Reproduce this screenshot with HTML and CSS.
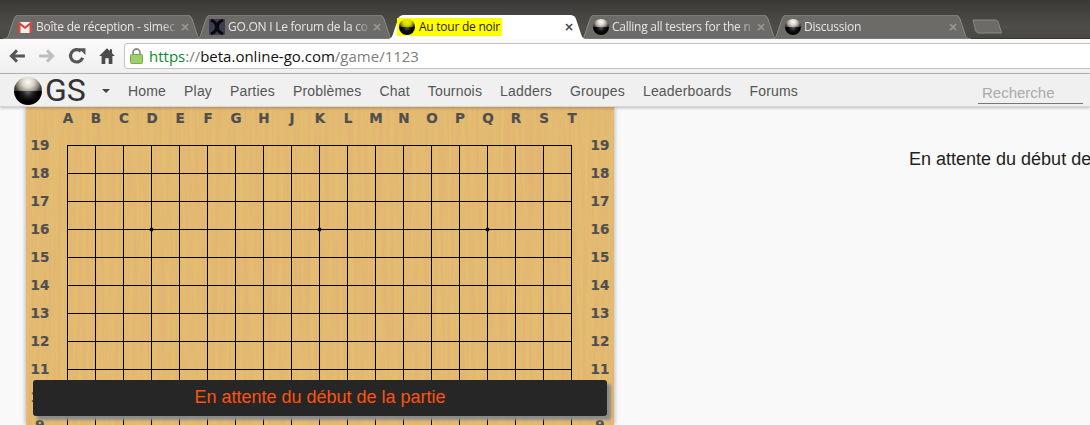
FILE: index.html
```html
<!DOCTYPE html>
<html lang="fr">
<head>
<meta charset="utf-8">
<title>Au tour de noir</title>
<link rel="stylesheet" href="styles.css">
</head>
<body>
<svg class="defs" width="0" height="0" aria-hidden="true">
  <defs>
    <radialGradient id="ballTop" gradientUnits="userSpaceOnUse" cx="14" cy="5" r="14">
      <stop offset="0" stop-color="#fdfbf6"/><stop offset="0.4" stop-color="#dcd6cb"/><stop offset="0.75" stop-color="#908c85"/><stop offset="1" stop-color="#3c3a38"/>
    </radialGradient>
    <radialGradient id="ballBottom" gradientUnits="userSpaceOnUse" cx="14" cy="14" r="14">
      <stop offset="0" stop-color="#6e6e6e"/><stop offset="0.4" stop-color="#222"/><stop offset="0.75" stop-color="#000"/>
    </radialGradient>
    <radialGradient id="ballTopYellow" gradientUnits="userSpaceOnUse" cx="14" cy="5" r="14">
      <stop offset="0" stop-color="#f4f000"/><stop offset="0.5" stop-color="#d8d400"/><stop offset="0.8" stop-color="#8a8800"/><stop offset="1" stop-color="#2a2a00"/>
    </radialGradient>
    <symbol id="ball" viewBox="0 0 28 28">
      <path d="M0 14A14 14 0 0 1 28 14Z" fill="url(#ballTop)"/>
      <path d="M0 14A14 14 0 0 0 28 14Z" fill="url(#ballBottom)"/>
    </symbol>
    <symbol id="ballYellow" viewBox="0 0 28 28">
      <path d="M0 14A14 14 0 0 1 28 14Z" fill="url(#ballTopYellow)"/>
      <path d="M0 14A14 14 0 0 0 28 14Z" fill="url(#ballBottom)"/>
    </symbol>
    <symbol id="tabShape" viewBox="0 0 200 24" preserveAspectRatio="none">
      <path d="M0 24C4 24 5 22 6 19L11 4C12 1 14 0 17 0H183C186 0 188 1 189 4L194 19C195 22 196 24 200 24Z"/>
    </symbol>
  </defs>
</svg>

<header class="tabstrip">
  <div class="tab">
    <svg class="tab-bg" aria-hidden="true"><use href="#tabShape"/></svg>
    <svg class="favicon" viewBox="0 0 16 16"><rect x="1" y="3" width="14" height="11" fill="#eee"/><path d="M1 3V14H3.500V6.500L8 10L12.500 6.500V14H15V3H13.500L8 7.500L2.500 3Z" fill="#d44a3a"/></svg>
    <span class="tab-title">Boîte de réception - simec</span>
    <span class="tab-close">×</span>
  </div>
  <div class="tab">
    <svg class="tab-bg" aria-hidden="true"><use href="#tabShape"/></svg>
    <svg class="favicon" viewBox="0 0 16 16"><rect width="16" height="16" rx="1" fill="#3e3c52"/><path d="M2 1C7 3 7.500 6 7.500 8C7.500 10 7 13 2 15M14 1C9 3 8.500 6 8.500 8C8.500 10 9 13 14 15" fill="none" stroke="#0a0a0a" stroke-width="3"/></svg>
    <span class="tab-title">GO.ON I Le forum de la co</span>
    <span class="tab-close">×</span>
  </div>
  <div class="tab tab-active">
    <svg class="tab-bg" aria-hidden="true"><use href="#tabShape"/></svg>
    <span class="tab-flash">
      <svg class="favicon"><use href="#ballYellow"/></svg>
      <span class="tab-flash-text">Au tour de noir</span>
    </span>
    <span class="tab-close">×</span>
  </div>
  <div class="tab">
    <svg class="tab-bg" aria-hidden="true"><use href="#tabShape"/></svg>
    <svg class="favicon"><use href="#ball"/></svg>
    <span class="tab-title">Calling all testers for the n</span>
    <span class="tab-close">×</span>
  </div>
  <div class="tab">
    <svg class="tab-bg" aria-hidden="true"><use href="#tabShape"/></svg>
    <svg class="favicon"><use href="#ball"/></svg>
    <span class="tab-title tab-title-full">Discussion</span>
    <span class="tab-close">×</span>
  </div>
  <svg class="new-tab" viewBox="0 0 30 15" aria-hidden="true"><path d="M1 1H23C25 1 26 2 26.500 4L29.500 14H7C5 14 4 13 3.500 11Z"/></svg>
</header>

<div class="toolbar">
  <div class="tool-buttons">
    <svg class="tool tool-back" viewBox="0 0 16 16"><path d="M8 3L3 8L8 13M3 8H15" fill="none" stroke="#555" stroke-width="2.600"/></svg>
    <svg class="tool tool-forward" viewBox="0 0 16 16"><path d="M8 3L13 8L8 13M13 8H1" fill="none" stroke="#bdbdbd" stroke-width="2.600"/></svg>
    <svg class="tool tool-reload" viewBox="0 0 16 16"><path d="M13 9.500A5.500 5.500 0 1 1 11.500 3.800" fill="none" stroke="#555" stroke-width="2.800"/><path d="M9.500 1L15.500 1V7Z" fill="#555"/></svg>
    <svg class="tool tool-home" viewBox="0 0 16 16"><path d="M8 1L1 8H3.200V15H6.500V10H9.500V15H12.800V8H15L12.500 5.500V2H10.500V3.500Z" fill="#4c4c4c"/></svg>
  </div>
  <div class="omnibox">
    <svg class="lock" viewBox="0 0 13 16"><path d="M3 8V4.500A3.500 3.500 0 0 1 10 4.500V8" fill="none" stroke="#8c8c8c" stroke-width="1.800"/><rect x="0.500" y="6.500" width="12" height="9" rx="1" fill="#9ccf6c" stroke="#7cab4c"/></svg>
    <span class="url"><span class="url-https">https</span><span class="url-dim">://</span><span class="url-host">beta.online-go.com</span><span class="url-dim">/game/1123</span></span>
  </div>
</div>

<nav class="navbar">
  <a class="logo">
    <svg class="logo-ball"><use href="#ball"/></svg>
    <span class="logo-text">GS</span>
  </a>
  <svg class="logo-caret" viewBox="0 0 8 4" aria-hidden="true"><path d="M0 0H8L4 4Z"/></svg>
  <ul class="nav-links">
    <li>Home</li><li>Play</li><li>Parties</li><li>Problèmes</li><li>Chat</li><li>Tournois</li><li>Ladders</li><li>Groupes</li><li>Leaderboards</li><li>Forums</li>
  </ul>
  <input class="search" type="text" placeholder="Recherche">
</nav>

<main class="page">
  <section class="board">
    <svg class="goban" width="588" height="318" viewBox="0 0 588 318">
      <defs>
        <filter id="wood" x="0" y="0" width="100%" height="100%">
          <feTurbulence type="fractalNoise" baseFrequency="0.28 0.008" numOctaves="3" seed="7"/>
          <feColorMatrix type="matrix" values="0 0 0 0 0.78  0 0 0 0 0.52  0 0 0 0 0.16  2 0 0 0 -0.66"/>
        </filter>
        <pattern id="cells" patternUnits="userSpaceOnUse" x="41" y="38" width="28" height="28">
          <path d="M0.500 0V28M0 0.500H28" stroke="#000" stroke-width="1" fill="none"/>
        </pattern>
      </defs>
      <rect width="588" height="318" fill="#e2b672"/>
      <rect width="588" height="318" filter="url(#wood)"/>
      <rect x="41" y="38" width="505" height="505" fill="url(#cells)"/>
      <circle cx="125.500" cy="122.500" r="2"/><circle cx="293.500" cy="122.500" r="2"/><circle cx="461.500" cy="122.500" r="2"/>
      <g class="coords coords-x">
        <text x="42" y="16">A</text><text x="70" y="16">B</text><text x="98" y="16">C</text><text x="126" y="16">D</text><text x="154" y="16">E</text><text x="182" y="16">F</text><text x="210" y="16">G</text><text x="238" y="16">H</text><text x="266" y="16">J</text><text x="294" y="16">K</text><text x="322" y="16">L</text><text x="350" y="16">M</text><text x="378" y="16">N</text><text x="406" y="16">O</text><text x="434" y="16">P</text><text x="462" y="16">Q</text><text x="490" y="16">R</text><text x="518" y="16">S</text><text x="546" y="16">T</text>
      </g>
      <g class="coords">
        <text x="14" y="43">19</text><text x="14" y="71">18</text><text x="14" y="99">17</text><text x="14" y="127">16</text><text x="14" y="155">15</text><text x="14" y="183">14</text><text x="14" y="211">13</text><text x="14" y="239">12</text><text x="14" y="267">11</text><text x="14" y="295">10</text><text x="14" y="323">9</text>
        <text x="574" y="43">19</text><text x="574" y="71">18</text><text x="574" y="99">17</text><text x="574" y="127">16</text><text x="574" y="155">15</text><text x="574" y="183">14</text><text x="574" y="211">13</text><text x="574" y="239">12</text><text x="574" y="267">11</text><text x="574" y="295">10</text><text x="574" y="323">9</text>
      </g>
    </svg>
    <div class="game-status">En attente du début de la partie</div>
  </section>
  <aside class="side">
    <p class="side-message">En attente du début de</p>
  </aside>
</main>
</body>
</html>
```
FILE: styles.css
```css
* { box-sizing: border-box; }
html, body { margin: 0; height: 425px; overflow: hidden; }
body { width: 1090px; background: #f9f9f9; display: flex; flex-direction: column; font-family: "Liberation Sans", Arial, sans-serif; }
.defs { position: absolute; }

.tabstrip {
  height: 39px; flex: none; display: flex; align-items: flex-end; padding-left: 3px;
  background: linear-gradient(#3b3a37, #4f4d48 70%, #48463f);
  box-shadow: inset 0 -1px 0 #3b3a36;
}
.tab {
  position: relative; width: 200px; height: 24px; margin-right: -8px; flex: none;
  display: flex; align-items: center; padding: 0 12px 1px 14px;
  fill: #6c6b67; color: #e6e6e6;
  font: 12px/16px "Open Sans", "Noto Sans", sans-serif; letter-spacing: -0.25px;
}
.tab-active { z-index: 2; fill: #fff; color: #2a1a00; }
.tab-bg { position: absolute; left: 0; top: 0; width: 200px; height: 24px; stroke: #8a8985; stroke-width: 1; overflow: visible; }
.tab-active .tab-bg { stroke: none; }
.favicon { position: relative; width: 16px; height: 16px; flex: none; }
.tab-title {
  position: relative; flex: 1; min-width: 0; margin-left: 3px; white-space: nowrap;
  -webkit-mask-image: linear-gradient(90deg, #000 90%, rgba(0, 0, 0, .25));
  mask-image: linear-gradient(90deg, #000 90%, rgba(0, 0, 0, .25));
}
.tab-flash { position: relative; display: flex; align-items: center; height: 18px; padding: 0 2px; margin-left: -4px; background: #ffff00; }
.tab-flash-text { margin-left: 4px; white-space: nowrap; }
.tab-close { position: relative; width: 12px; flex: none; margin-left: 3px; text-align: center; font: 700 12px/16px "DejaVu Sans", sans-serif; letter-spacing: 0; color: #9a9a98; }
.tab-active .tab-close { margin-left: auto; color: #444; }
.new-tab { width: 30px; height: 15px; margin: 0 0 5px 9px; flex: none; fill: #6c6b67; stroke: #8a8985; }

.toolbar {
  height: 35px; flex: none; display: flex; align-items: center; padding: 0 0 0 8px;
  background: linear-gradient(#fafafa, #f0f0f0);
  border-bottom: 1px solid #b8b8b8;
}
.tool-buttons { display: flex; align-items: center; gap: 12px; width: 116px; flex: none; }
.tool { width: 18px; height: 18px; flex: none; }
.omnibox {
  flex: 1; height: 26px; margin-right: -6px; display: flex; align-items: center; gap: 6px; padding-left: 5px;
  background: #fff; border: 1px solid #c2c2c2; border-radius: 3px;
}
.lock { width: 13px; height: 16px; flex: none; }
.url { font: 15px/20px "Open Sans", "Noto Sans", sans-serif; white-space: nowrap; }
.url-https { color: #0a8a2c; }
.url-dim { color: #7d7d7d; }
.url-host { color: #111; }

.navbar {
  position: relative; z-index: 3; height: 33px; flex: none; display: flex; align-items: center; padding-left: 14px;
  background: #f0f0f0; border-bottom: 1px solid #d4d4d4; box-shadow: 0 1px 3px rgba(0, 0, 0, .25);
}
.logo { display: flex; align-items: center; width: 88px; flex: none; }
.logo-ball { width: 28px; height: 28px; flex: none; margin-top: 2px; }
.logo-text { margin-left: 3px; font: 32px/33px Roboto, sans-serif; color: #333; }
.logo-caret { width: 8px; height: 4px; flex: none; fill: #444; margin-top: 1px; }
.nav-links { display: flex; gap: 18px; margin: 1px 0 0 18px; padding: 0; list-style: none; font-size: 14px; letter-spacing: 0.18px; color: #555; }
.search {
  position: absolute; left: 978px; bottom: 2px; width: 105px; height: 24px; padding: 2px 4px 0;
  background: transparent; border: 0; border-bottom: 1px solid #777; outline: 0; font: 15px "Liberation Sans", sans-serif;
}
.search::placeholder { color: #aaa; opacity: 1; }

.page { flex: 1; min-height: 0; overflow: hidden; display: flex; background: #f9f9f9; padding-left: 26px; }
.board { position: relative; width: 588px; height: 318px; flex: none; box-shadow: 0 0 5px rgba(0, 0, 0, .35); }
.goban { display: block; }
.coords text { font: 700 13.5px "DejaVu Sans", sans-serif; fill: #4f4f4f; stroke: #4f4f4f; stroke-width: .2px; text-anchor: middle; }
.game-status {
  position: absolute; left: 7px; top: 273px; width: 574px; height: 36px;
  background: #262626; border-radius: 3px; box-shadow: 4px 4px 3px #8a8a8a;
  color: #ff5210; font-size: 18px; line-height: 35px; text-align: center;
}
.side { flex: none; width: 476px; padding-left: 295px; }
.side-message { margin: 42px 0 0; font-size: 18px; line-height: 20px; color: #222; white-space: nowrap; }
```
